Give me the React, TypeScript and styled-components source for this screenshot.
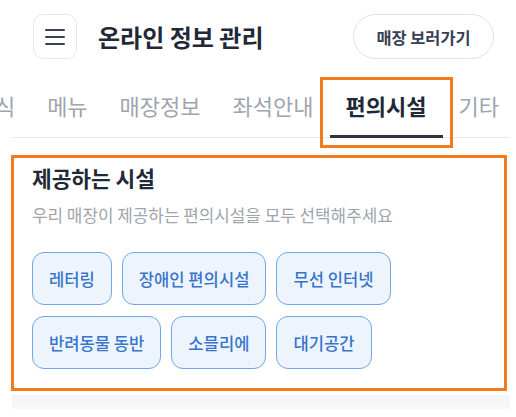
import styled, { createGlobalStyle } from 'styled-components';

const GlobalStyle = createGlobalStyle`
  html, body {
    margin: 0;
    padding: 0;
    background: #ffffff;
    overflow: hidden;
  }
  body {
    font-family: "Noto Sans CJK KR", "Noto Sans", sans-serif;
    color: #1f2937;
  }
  * {
    box-sizing: border-box;
  }
`;

const highlight = '#f27b1b';

const Page = styled.div`
  width: 516px;
  height: 417px;
`;

const Header = styled.header`
  display: flex;
  align-items: center;
  padding: 14px 22px 0 33px;
`;

const MenuButton = styled.button`
  width: 44px;
  height: 45px;
  border: 1px solid #e6e8eb;
  border-radius: 10px;
  background: #ffffff;
  display: flex;
  align-items: center;
  justify-content: center;
  padding: 0;
  cursor: pointer;
`;

const Title = styled.h1`
  margin: 0 0 0 21px;
  font-size: 24px;
  font-weight: 700;
  line-height: 30px;
  color: #1f2937;
  flex: 1;
`;

const StoreButton = styled.button`
  width: 141px;
  height: 45px;
  border: 1px solid #dfe2e6;
  border-radius: 23px;
  background: #ffffff;
  font-family: inherit;
  font-size: 16.4px;
  font-weight: 700;
  color: #374151;
  cursor: pointer;
`;

// scrolled to its end: the first tab runs off the left edge
const TabNav = styled.nav`
  display: flex;
  justify-content: flex-end;
  margin: 28px 6px 0 12px;
  border-bottom: 1px solid #e8eaed;
`;

const Tab = styled.div<{ active?: boolean }>`
  flex: none;
  height: 51px;
  padding: 4px 16px 0;
  margin-bottom: -1px;
  font-size: 22px;
  line-height: 28px;
  white-space: nowrap;
  color: ${({ active }) => (active ? '#1f2937' : '#a0a5ad')};
  font-weight: ${({ active }) => (active ? 700 : 400)};
  border-bottom: 3px solid ${({ active }) => (active ? '#2d3440' : 'transparent')};
  ${({ active }) =>
    active &&
    `
    outline: 3px solid ${highlight};
    outline-offset: 7px;
  `}

  &:last-child {
    margin-right: -5px;
  }
`;

const Card = styled.section`
  margin: 17px 9px 0 11px;
  border: 3px solid ${highlight};
  padding: 6px 18px 19px;
`;

const CardTitle = styled.h2`
  margin: 0;
  font-size: 21.4px;
  font-weight: 700;
  line-height: 28px;
  color: #1f2937;
`;

const CardHint = styled.p`
  margin: 12px 0 0;
  font-size: 16.9px;
  line-height: 22px;
  color: #a0a5ad;
`;

const ChipList = styled.div`
  display: flex;
  flex-wrap: wrap;
  gap: 11px 10px;
  margin-top: 26px;
  width: 380px;
`;

const Chip = styled.button`
  height: 53px;
  padding: 0 16px;
  border: 1.5px solid #6fa5ea;
  border-radius: 12px;
  background: #eef4fc;
  font-family: inherit;
  font-size: 16.6px;
  font-weight: 500;
  color: #3775cc;
  cursor: pointer;
`;

const NextSection = styled.div`
  margin: 4px 6px 0 12px;
  height: 14px;
  background: linear-gradient(#f3f4f6, #f8f9fa);
`;

const HamburgerIcon = () => (
  <svg width="20" height="18" viewBox="0 0 20 18" fill="none">
    <path d="M1 2h18M1 9h18M1 16h18" stroke="#3a4150" strokeWidth="2" strokeLinecap="round" />
  </svg>
);

const tabs = ['결제방식', '메뉴', '매장정보', '좌석안내', '편의시설', '기타'];
const facilities = ['레터링', '장애인 편의시설', '무선 인터넷', '반려동물 동반', '소믈리에', '대기공간'];

export default function App() {
  return (
    <Page>
      <GlobalStyle />
      <Header>
        <MenuButton aria-label="메뉴 열기">
          <HamburgerIcon />
        </MenuButton>
        <Title>온라인 정보 관리</Title>
        <StoreButton>매장 보러가기</StoreButton>
      </Header>
      <TabNav>
        {tabs.map((t) => (
          <Tab key={t} active={t === '편의시설'}>
            {t}
          </Tab>
        ))}
      </TabNav>
      <Card>
        <CardTitle>제공하는 시설</CardTitle>
        <CardHint>우리 매장이 제공하는 편의시설을 모두 선택해주세요</CardHint>
        <ChipList>
          {facilities.map((f) => (
            <Chip key={f}>{f}</Chip>
          ))}
        </ChipList>
      </Card>
      <NextSection />
    </Page>
  );
}
